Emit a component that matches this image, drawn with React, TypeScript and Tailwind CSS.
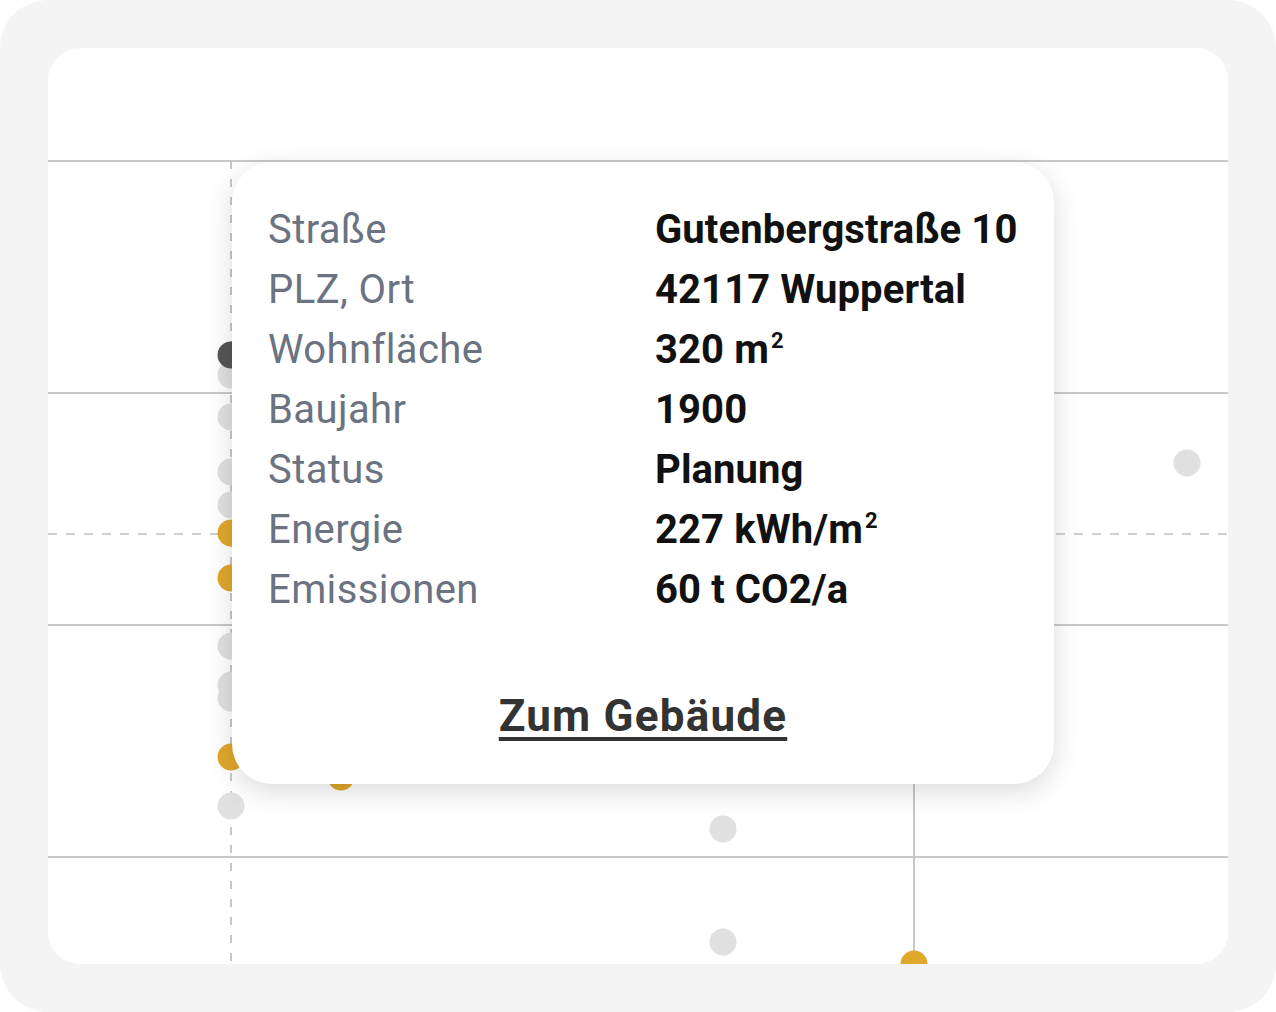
import React from 'react'

const rows = [
  { label: 'Straße', value: 'Gutenbergstraße 10' },
  { label: 'PLZ, Ort', value: '42117 Wuppertal' },
  { label: 'Wohnfläche', value: '320 m', sup: '2' },
  { label: 'Baujahr', value: '1900' },
  { label: 'Status', value: 'Planung' },
  { label: 'Energie', value: '227 kWh/m', sup: '2' },
  { label: 'Emissionen', value: '60 t CO2/a' },
]

// chart coordinates are relative to the white card (card starts at 48,48)
const gray = '#e0e0e0'
const amber = '#dfa72b'
const dots = [
  { x: 183, y: 327, c: gray },
  { x: 183, y: 307, c: '#555555' },
  { x: 183, y: 369, c: gray },
  { x: 183, y: 424, c: gray },
  { x: 183, y: 457, c: gray },
  { x: 183, y: 485, c: amber },
  { x: 183, y: 530, c: amber },
  { x: 183, y: 598, c: gray },
  { x: 183, y: 637, c: gray },
  { x: 183, y: 650, c: gray },
  { x: 183, y: 709, c: amber },
  { x: 183, y: 758, c: gray },
  { x: 293, y: 729, c: amber },
  { x: 1139, y: 415, c: gray },
  { x: 675, y: 781, c: gray },
  { x: 675, y: 894, c: gray },
  { x: 866, y: 916, c: amber },
]

function Chart() {
  return (
    <svg width="1180" height="916" viewBox="0 0 1180 916" className="block">
      {[113, 345, 577, 809].map((y) => (
        <line key={y} x1="0" x2="1180" y1={y} y2={y} stroke="#c8c8c8" strokeWidth="2" />
      ))}
      <line x1="0" x2="1180" y1="486" y2="486" stroke="#d0d0d0" strokeWidth="2" strokeDasharray="9 9" />
      <line x1="183" x2="183" y1="113" y2="916" stroke="#c8c8c8" strokeWidth="2" strokeDasharray="8 10" />
      <line x1="866" x2="866" y1="113" y2="916" stroke="#c8c8c8" strokeWidth="2" />
      {dots.map((d, i) => (
        <circle key={i} cx={d.x} cy={d.y} r="13.5" fill={d.c} />
      ))}
    </svg>
  )
}

export default function App() {
  return (
    <div className="w-[1276px] h-[1012px] bg-[#f4f4f4] rounded-[48px] p-12">
      <div className="relative h-full bg-white rounded-[32px] overflow-hidden">
        <Chart />

        {/* Tooltip */}
        <div
          className="absolute left-[184px] top-[114px] w-[822px] bg-white rounded-[40px] shadow-[0_8px_28px_rgba(0,0,0,0.14)] pt-[38px] pb-[38px] px-9"
          style={{ fontFamily: 'Roboto, sans-serif' }}
        >
          <div className="grid grid-cols-[387px_1fr] text-[40px] leading-[60px]">
            {rows.map((r) => (
              <React.Fragment key={r.label}>
                <div className="text-[#6b7280] tracking-[0.4px]">{r.label}</div>
                <div className="font-bold text-[#111111] tracking-[0.1px] whitespace-nowrap">
                  {r.value}
                  {r.sup && (
                    <span className="relative -top-[15px] ml-[2px] text-[22px] leading-none align-baseline">
                      {r.sup}
                    </span>
                  )}
                </div>
              </React.Fragment>
            ))}
          </div>
          <div className="mt-[66px] h-[60px] text-center text-[44px] leading-[60px]">
            <a
              href="#"
              className="font-bold text-[#333333] tracking-[1.2px] underline decoration-[4px] underline-offset-[6px]"
            >
              Zum Gebäude
            </a>
          </div>
        </div>
      </div>
    </div>
  )
}
